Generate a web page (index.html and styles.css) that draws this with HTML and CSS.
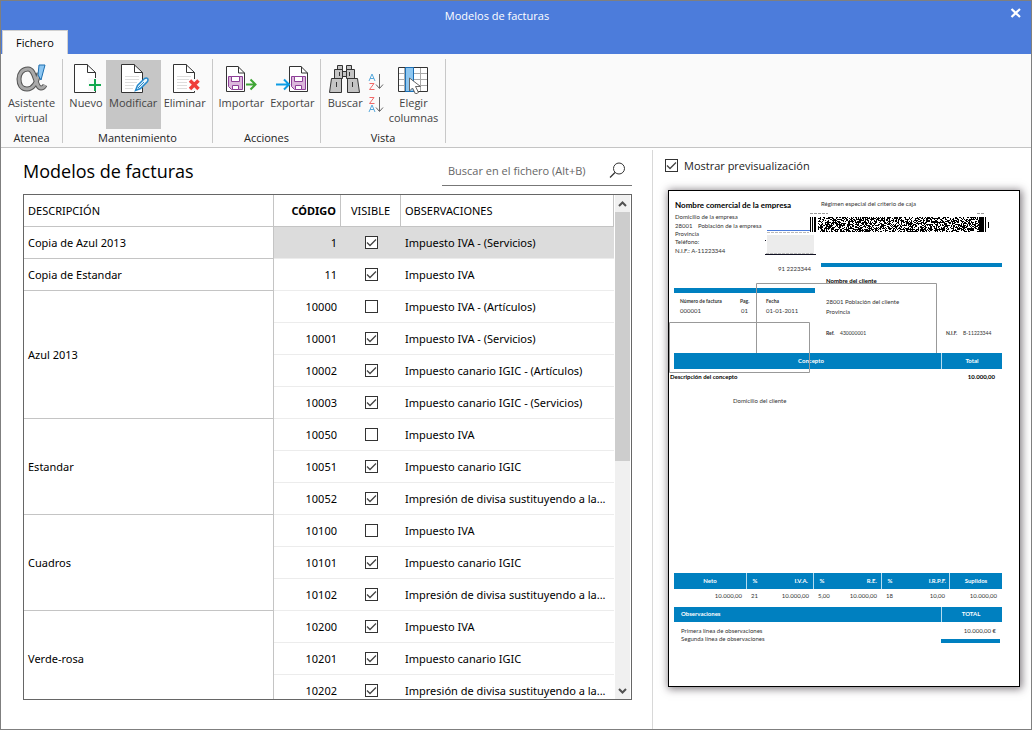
FILE: index.html
```html
<!DOCTYPE html>
<html lang="es">
<head>
<meta charset="utf-8">
<title>Modelos de facturas</title>
<link rel="stylesheet" href="styles.css">
</head>
<body>
<div class="window">
  <header class="titlebar">
    <div class="title">Modelos de facturas</div>
    <button class="close" aria-label="Cerrar"><svg width="12" height="12" viewBox="0 0 12 12"><path d="M1.5 2 10 10M10 2 1.5 10" stroke="#fff" stroke-width="2.2" fill="none"/></svg></button>
    <button class="tab">Fichero</button>
  </header>

  <nav class="ribbon">
    <section class="group group-atenea">
      <div class="tools">
        <button class="tool">
          <svg width="32" height="32" viewBox="0 0 32 32"><path d="M24 11c-2 9-6 16-12 16C6 27 4 22 4 17S7 7 13 7c8 0 7 19 13 19 2 0 3-1 4-3" fill="none" stroke="#555" stroke-width="5"/><path d="M24 11c-2 9-6 16-12 16C6 27 4 22 4 17S7 7 13 7c8 0 7 19 13 19 2 0 3-1 4-3" fill="none" stroke="#a9a9a9" stroke-width="3"/><path d="M24 3h6l-4 15-3-5z" fill="#8cc6f2" stroke="#1d6fb0"/></svg>
          <span>Asistente<br>virtual</span>
        </button>
      </div>
      <div class="caption">Atenea</div>
    </section>
    <section class="group group-mant">
      <div class="tools">
        <button class="tool">
          <svg width="32" height="32" viewBox="0 0 32 32"><path d="M4.500 2.500H17L25.500 10.500V30.500H4.500z" fill="#fff" stroke="#333"/><path d="M17.500 2.500V10.500H25.500" fill="none" stroke="#333"/><path d="M18 16h14v13H18z" fill="#fafafa"/><path d="M25 17v12M19 23h12" stroke="#12a84e" stroke-width="2"/></svg>
          <span>Nuevo</span>
        </button>
        <button class="tool selected">
          <svg width="32" height="32" viewBox="0 0 32 32"><path d="M4.500 2.500H17L25.500 10.500V30.500H4.500z" fill="#fff" stroke="#333"/><path d="M17.500 2.500V10.500H25.500" fill="none" stroke="#333"/><path d="M8 14.500h14M8 17.500h14M8 20.500h12M8 23.500h9M8 26.500h8" stroke="#ddd"/><path d="M18.500 28.500l2-5 7-7q2-1 3 0t0 3l-7 7z" fill="#e8f4fc" stroke="#2489cc" stroke-width="1.500"/><path d="M21 26l6-6" stroke="#2489cc"/></svg>
          <span>Modificar</span>
        </button>
        <button class="tool">
          <svg width="32" height="32" viewBox="0 0 32 32"><path d="M4.500 2.500H17L25.500 10.500V30.500H4.500z" fill="#fff" stroke="#333"/><path d="M17.500 2.500V10.500H25.500" fill="none" stroke="#333"/><path d="M8 14.500h14M8 17.500h14M8 20.500h10M8 23.500h10M8 26.500h10" stroke="#ddd"/><path d="M20 17h11v12H20z" fill="#fafafa"/><path d="M21 18.500l8.500 8.500M29.500 18.500L21 27" stroke="#ef3e3a" stroke-width="3.500"/></svg>
          <span>Eliminar</span>
        </button>
      </div>
      <div class="caption">Mantenimiento</div>
    </section>
    <section class="group group-acc">
      <div class="tools">
        <button class="tool">
          <svg width="32" height="32" viewBox="0 0 32 32"><path d="M1.500 4.500H13L19.500 11V29.500H1.500z" fill="#fff" stroke="#333"/><path d="M13.500 4.500V11H19.500" fill="none" stroke="#333"/><path d="M3.500 14.500h14v13h-11l-3-3z" fill="#dcb8dc" stroke="#8d3f97"/><path d="M6.500 14.500h8v5h-8zM7.500 23.500h6v4h-6z" fill="#fff" stroke="#8d3f97"/><path d="M21 22.500h9M25.500 17.500l5 5-5 5" stroke="#3fa535" stroke-width="2" fill="none"/></svg>
          <span>Importar</span>
        </button>
        <button class="tool">
          <svg width="32" height="32" viewBox="0 0 32 32"><path d="M13.500 4.500H25L31.500 11V29.500H13.500z" fill="#fff" stroke="#333"/><path d="M25.500 4.500V11H31.500" fill="none" stroke="#333"/><path d="M15.500 14.500h14v13h-11l-3-3z" fill="#dcb8dc" stroke="#8d3f97"/><path d="M18.500 14.500h8v5h-8zM19.500 23.500h6v4h-6z" fill="#fff" stroke="#8d3f97"/><path d="M0 22.500h12M8 17.500l5 5-5 5" stroke="#0c9ce4" stroke-width="2" fill="none"/></svg>
          <span>Exportar</span>
        </button>
      </div>
      <div class="caption">Acciones</div>
    </section>
    <section class="group group-vista">
      <div class="tools">
        <button class="tool">
          <svg width="32" height="32" viewBox="0 0 32 32"><g fill="#c4c4c4" stroke="#333"><path d="M8.500 3.500h5v4h-5zM17.500 3.500h5v4h-5zM13.500 9.500h4v5h-4zM5.500 7.500h8v9h-8zM17.500 7.500h8v9h-8zM2.500 16.500h10v14h-12zM18.500 16.500h10l2 14h-12z"/></g><path d="M10.500 10v4M20.500 10v4M7.500 20v5M23.500 20v5" stroke="#333"/></svg>
          <span>Buscar</span>
        </button>
        <div class="sorts">
          <button class="sort" aria-label="Orden ascendente"><svg width="16" height="18" viewBox="0 0 16 18"><path d="M1 8l3-7 3 7M2 5.500h4" stroke="#58a9dc" fill="none"/><path d="M1.500 10.500h4.500L1.500 16.500h5" stroke="#f06868" fill="none"/><path d="M11.500 1v14M8 11.500l3.500 4 3.500-4" stroke="#666" fill="none"/></svg></button>
          <button class="sort" aria-label="Orden descendente"><svg width="16" height="18" viewBox="0 0 16 18"><path d="M1.500 1.500h4.500L1.500 7.500h5" stroke="#f06868" fill="none"/><path d="M1 16l3-7 3 7M2 13.500h4" stroke="#58a9dc" fill="none"/><path d="M11.500 1v14M8 11.500l3.500 4 3.500-4" stroke="#666" fill="none"/></svg></button>
        </div>
        <button class="tool">
          <svg width="32" height="32" viewBox="0 0 32 32"><path d="M1.500 5.500h29v24h-29z" fill="#fff" stroke="#333"/><path d="M2 11.500h28M2 17.500h28M2 23.500h28M7.500 6v23M23.500 6v23" stroke="#aaa"/><path d="M8.500 5.500h8v24h-8z" fill="#8fc7f0" stroke="#1b6fb5"/><path d="M12.500 16v13l3-3 3 6 3-1.500-3-6h5z" fill="#fff" stroke="#666"/></svg>
          <span>Elegir<br>columnas</span>
        </button>
      </div>
      <div class="caption">Vista</div>
    </section>
  </nav>

  <div class="content">
    <main class="list">
      <div class="list-head">
        <h1>Modelos de facturas</h1>
        <label class="search">
          <input type="text" placeholder="Buscar en el fichero (Alt+B)" aria-label="Buscar en el fichero">
          <svg width="17" height="17" viewBox="0 0 17 17"><circle cx="10" cy="6.500" r="5.500" fill="none" stroke="#333"/><path d="M6 10.500L1 15.500" stroke="#333" stroke-width="1.300"/></svg>
        </label>
      </div>
      <div class="grid">
        <div class="grid-view">
          <table>
            <colgroup><col class="c-desc"><col class="c-code"><col class="c-vis"><col class="c-obs"></colgroup>
            <thead><tr><th>DESCRIPCIÓN</th><th class="code">CÓDIGO</th><th class="vis">VISIBLE</th><th class="obs">OBSERVACIONES</th></tr></thead>
            <tbody>
              <tr class="current"><td class="desc">Copia de Azul 2013</td><td class="code">1</td><td class="vis"><input type="checkbox" aria-label="Visible 1" checked></td><td class="obs">Impuesto IVA - (Servicios)</td></tr>
              <tr><td class="desc">Copia de Estandar</td><td class="code">11</td><td class="vis"><input type="checkbox" aria-label="Visible 11" checked></td><td class="obs">Impuesto IVA</td></tr>
              <tr><td class="desc" rowspan="4">Azul 2013</td><td class="code">10000</td><td class="vis"><input type="checkbox" aria-label="Visible 10000"></td><td class="obs">Impuesto IVA - (Artículos)</td></tr>
              <tr><td class="code">10001</td><td class="vis"><input type="checkbox" aria-label="Visible 10001" checked></td><td class="obs">Impuesto IVA - (Servicios)</td></tr>
              <tr><td class="code">10002</td><td class="vis"><input type="checkbox" aria-label="Visible 10002" checked></td><td class="obs">Impuesto canario IGIC - (Artículos)</td></tr>
              <tr><td class="code">10003</td><td class="vis"><input type="checkbox" aria-label="Visible 10003" checked></td><td class="obs">Impuesto canario IGIC - (Servicios)</td></tr>
              <tr><td class="desc" rowspan="3">Estandar</td><td class="code">10050</td><td class="vis"><input type="checkbox" aria-label="Visible 10050"></td><td class="obs">Impuesto IVA</td></tr>
              <tr><td class="code">10051</td><td class="vis"><input type="checkbox" aria-label="Visible 10051" checked></td><td class="obs">Impuesto canario IGIC</td></tr>
              <tr><td class="code">10052</td><td class="vis"><input type="checkbox" aria-label="Visible 10052" checked></td><td class="obs">Impresión de divisa sustituyendo a la...</td></tr>
              <tr><td class="desc" rowspan="3">Cuadros</td><td class="code">10100</td><td class="vis"><input type="checkbox" aria-label="Visible 10100"></td><td class="obs">Impuesto IVA</td></tr>
              <tr><td class="code">10101</td><td class="vis"><input type="checkbox" aria-label="Visible 10101" checked></td><td class="obs">Impuesto canario IGIC</td></tr>
              <tr><td class="code">10102</td><td class="vis"><input type="checkbox" aria-label="Visible 10102" checked></td><td class="obs">Impresión de divisa sustituyendo a la...</td></tr>
              <tr><td class="desc" rowspan="3">Verde-rosa</td><td class="code">10200</td><td class="vis"><input type="checkbox" aria-label="Visible 10200" checked></td><td class="obs">Impuesto IVA</td></tr>
              <tr><td class="code">10201</td><td class="vis"><input type="checkbox" aria-label="Visible 10201" checked></td><td class="obs">Impuesto canario IGIC</td></tr>
              <tr><td class="code">10202</td><td class="vis"><input type="checkbox" aria-label="Visible 10202" checked></td><td class="obs">Impresión de divisa sustituyendo a la...</td></tr>
            </tbody>
          </table>
        </div>
        <div class="scrollbar">
          <button aria-label="Subir"><svg width="9" height="6" viewBox="0 0 9 6"><path d="M1 5l3.500-3.500L8 5" fill="none" stroke="#505050" stroke-width="2"/></svg></button>
          <div class="track"><div class="thumb"></div></div>
          <button aria-label="Bajar"><svg width="9" height="6" viewBox="0 0 9 6"><path d="M1 1l3.500 3.500L8 1" fill="none" stroke="#505050" stroke-width="2"/></svg></button>
        </div>
      </div>
    </main>

    <aside class="preview">
      <label class="show"><input type="checkbox" checked> Mostrar previsualización</label>
      <div class="paper">
        <svg class="invoice" viewBox="0 0 350 495">
          <g class="blue">
            <rect x="152" y="72" width="181" height="4"/>
            <rect x="5" y="97" width="141" height="5"/>
            <rect x="5" y="162" width="328" height="16"/>
            <rect x="5" y="382" width="328" height="16"/>
            <rect x="5" y="416" width="328" height="15"/>
            <rect x="272" y="448" width="59" height="4"/>
          </g>
          <path class="rule" d="M272.500 162v16M77.500 382v16M144.500 382v16M212.500 382v16M280.500 382v16M272.500 416v15"/>
          <rect x="98" y="44" width="47" height="19" fill="#ececec"/>
          <path d="M98 39.500h43" stroke="#4c7cdb"/>
          <path d="M98 41.500h42M97 62.500h48" stroke="#bbb" stroke-dasharray="3 1"/>
          <path d="M96 63.500h51M96 49.500h1" stroke="#112"/>
          <path id="barcode" d="" fill="#000"/>
          <path d="M141 22.500h18M308 22.500h8" stroke="#999" stroke-dasharray="3 1"/>
          <text class="name" x="6" y="17">Nombre comercial de la empresa</text>
          <g class="small">
            <text x="6" y="28">Domicilio de la empresa</text>
            <text x="6" y="37">28001</text><text x="29" y="37">Población de la empresa</text>
            <text x="6" y="45">Provincia</text>
            <text x="6" y="53">Teléfono:</text>
            <text x="6" y="62">N.I.F.: A-11223344</text>
            <text x="109" y="80">91 2223344</text>
            <text x="152" y="15">Régimen especial del criterio de caja</text>
            <text x="11" y="122">000001</text><text x="72" y="122">01</text><text x="97" y="122">01-01-2011</text>
            <text x="157" y="113">28001 Población del cliente</text>
            <text x="157" y="123">Provincia</text>
            <text x="64" y="212">Domicilio del cliente</text>
            <text x="12" y="442">Primera línea de observaciones</text>
            <text x="12" y="450">Segunda línea de observaciones</text>
            <text x="82" y="407">21</text><text x="149" y="407">5,00</text><text x="217" y="407">18</text>
            <g class="end">
              <text x="73" y="407">10.000,00</text><text x="140" y="407">10.000,00</text><text x="208" y="407">10.000,00</text>
              <text x="276" y="407">10,00</text><text x="328" y="407">10.000,00</text><text x="327" y="442">10.000,00 €</text>
            </g>
          </g>
          <g class="strong">
            <text x="157" y="92">Nombre del cliente</text>
            <text x="1" y="188">Descripción del concepto</text>
            <text class="end" x="326" y="188">10.000,00</text>
          </g>
          <g class="tiny">
            <text class="bold" x="11" y="112">Número de factura</text><text class="bold" x="71" y="112">Pag.</text><text class="bold" x="97" y="112">Fecha</text>
            <text class="bold" x="157" y="144">Ref.</text><text x="171" y="144">430000001</text>
            <text class="bold" x="277" y="144">N.I.F.</text><text x="294" y="144">B-11223344</text>
          </g>
          <g class="head">
            <text x="142" y="172">Concepto</text><text x="303" y="172">Total</text>
            <text x="41" y="392">Neto</text><text x="86" y="392">%</text><text x="153" y="392">%</text><text x="221" y="392">%</text><text x="307" y="392">Suplidos</text>
            <text x="302" y="425">TOTAL</text>
          </g>
          <g class="head end">
            <text x="139" y="392">I.V.A.</text><text x="208" y="392">R.E.</text><text x="277" y="392">I.R.P.F.</text>
          </g>
          <g class="head start"><text x="12" y="425">Observaciones</text></g>
          <path d="M87.500 162V92.500H267.500V162" class="frame"/>
          <path d="M0.500 131.500H140.500V181.500H0.500z" class="frame"/>
        </svg>
      </div>
    </aside>
  </div>
</div>
<script src="barcode.js"></script>
</body>
</html>
```
FILE: styles.css
```css
* { box-sizing: border-box; }
body { margin: 0; background: #fff; color: #000; font: 11px/15px "Open Sans", "Noto Sans", sans-serif; }
button { margin: 0; padding: 0; border: 0; background: none; font: inherit; color: inherit; }
svg { display: block; }

.window { height: 100vh; display: flex; flex-direction: column; border: 1px solid #7f7f7f; overflow: hidden; }

.titlebar { display: grid; grid-template-columns: 40px 1fr 78px; grid-template-rows: 29px 24px; background: #4c7cdb; color: #fff; flex: none; }
.title { grid-column: 2; text-align: center; line-height: 30px; }
.close { grid-column: 3; justify-self: end; padding: 0 9px 6px; }
.tab { grid-column: 1 / span 2; grid-row: 2; justify-self: start; width: 66px; margin-left: 1px; background: #fafafa; border: 1px solid #d0d0d0; border-bottom: 0; color: #000; font-size: 11px; }

.ribbon { display: flex; flex: none; height: 94px; padding-top: 5px; background: #fafafa; border-bottom: 1px solid #c4c4c4; }
.group { display: flex; flex-direction: column; height: 84px; border-right: 1px solid #c8c8c8; }
.tools { display: flex; justify-content: center; height: 71px; padding-top: 1px; }
.tool { display: flex; flex-direction: column; align-items: center; padding: 2px 3px 0; color: #444; height: 69px; }
.tool svg { margin-bottom: 1px; }
.tool.selected { background: #c6c6c6; width: 55px; padding: 2px 0 0; }
.caption { text-align: center; line-height: 18px; color: #222; }
.group-atenea { width: 62px; }
.group-mant { width: 150px; }
.group-acc { width: 108px; }
.group-vista { width: 125px; }
.sorts { display: flex; flex-direction: column; gap: 5px; padding: 13px 2px 0; }

.content { display: grid; grid-template-columns: 652fr 378fr; flex: 1; min-height: 0; padding-top: 2px; }
.list { min-width: 0; min-height: 0; display: flex; flex-direction: column; padding: 7px 20px 29px 22px; border-right: 1px solid #d8d8d8; }
.list-head { display: flex; justify-content: space-between; height: 29px; margin-bottom: 8px; }
h1 { margin: 0; font-size: 18px; font-weight: 400; line-height: 28px; }
.search { display: flex; align-items: center; justify-content: space-between; width: 190px; padding: 0 6px 1px; border-bottom: 1px solid #777; }
.search input { width: 150px; border: 0; padding: 0; outline: 0; font: inherit; background: none; }
.search input::placeholder { color: #666; opacity: 1; }

.grid { flex: 1; min-height: 0; display: flex; gap: 1px; border: 1px solid #666; }
.grid-view { flex: 1; overflow: hidden; }
table { width: 100%; table-layout: fixed; border-collapse: separate; border-spacing: 0; font-family: "Noto Sans", "Open Sans", sans-serif; }
.c-desc { width: 250px; }
.c-code { width: 67px; }
.c-vis { width: 60px; }
th, td { height: 32px; padding: 0 4px 1px; text-align: left; font-weight: 400; white-space: nowrap; border-bottom: 1px solid #ececec; }
th { border-bottom-color: #c4c4c4; border-right: 1px solid #c4c4c4; }
th.code { font-weight: 700; }
.desc { border-right: 1px solid #c4c4c4; border-bottom-color: #c4c4c4; }
.code { text-align: right; }
.vis { text-align: center; }
td.vis { padding-bottom: 2px; }
.current td:not(.desc) { background: #dcdcdc; }
input[type="checkbox"] { appearance: none; width: 13px; height: 13px; margin: 0; vertical-align: middle; border: 1px solid #333; background: #fff; }
input[type="checkbox"]:checked { background: #fff url("data:image/svg+xml,%3Csvg xmlns='http://www.w3.org/2000/svg' viewBox='0 0 11 11'%3E%3Cpath d='M1 5.500l3 3 6-6' fill='none' stroke='%23444' stroke-width='1.300'/%3E%3C/svg%3E") center / 11px 11px; }

.scrollbar { width: 15px; display: flex; flex-direction: column; background: #f0f0f0; margin-right: 1px; }
.scrollbar button { height: 17px; display: grid; place-items: center; }
.track { flex: 1; }
.thumb { height: 53%; background: #cdcdcd; }

.preview { min-width: 0; padding: 8px 11px 0 12px; }
.show { display: flex; align-items: center; gap: 6px; height: 15px; color: #222; }
.paper { margin: 17px 0 0 3px; background: #fff; border: 1px solid #000; box-shadow: 1px 1px 8px 1px rgba(60, 50, 60, .65); }
.invoice { width: 100%; font-family: Lato, "Open Sans", sans-serif; }
.invoice .blue { fill: #0080c0; }
.invoice .rule { stroke: #b5dcf0; fill: none; }
.invoice .frame { stroke: #999; fill: none; }
.invoice .name { font-size: 8px; font-weight: 700; }
.invoice .small { font-size: 6px; fill: #333; }
.invoice .strong { font-size: 6px; font-weight: 700; }
.invoice .tiny { font-size: 5px; fill: #333; }
.invoice .bold { font-weight: 700; }
.invoice .head { font-size: 6px; font-weight: 700; fill: #fff; text-anchor: middle; }
.invoice .end { text-anchor: end; }
.invoice .start { text-anchor: start; }
```
FILE: barcode.js
```js
// Two-dimensional code drawn as one-unit modules between its guard bars.
(function () {
  var seed = 20131;
  var d = "M141 26h1v15h-1zM143 26h1v15h-1zM145 26h2v15h-2zM310 26h5v15h-5zM316 26h1v15h-1zM319 31h1v6h-1z";
  for (var y = 26; y < 41; y++) {
    for (var x = 149; x < 310; x++) {
      seed ^= seed << 13;
      seed ^= seed >>> 17;
      seed ^= seed << 5;
      if ((seed >>> 8) % 100 < 54) d += "M" + x + " " + y + "h1v1h-1z";
    }
  }
  document.getElementById("barcode").setAttribute("d", d);
})();
```
